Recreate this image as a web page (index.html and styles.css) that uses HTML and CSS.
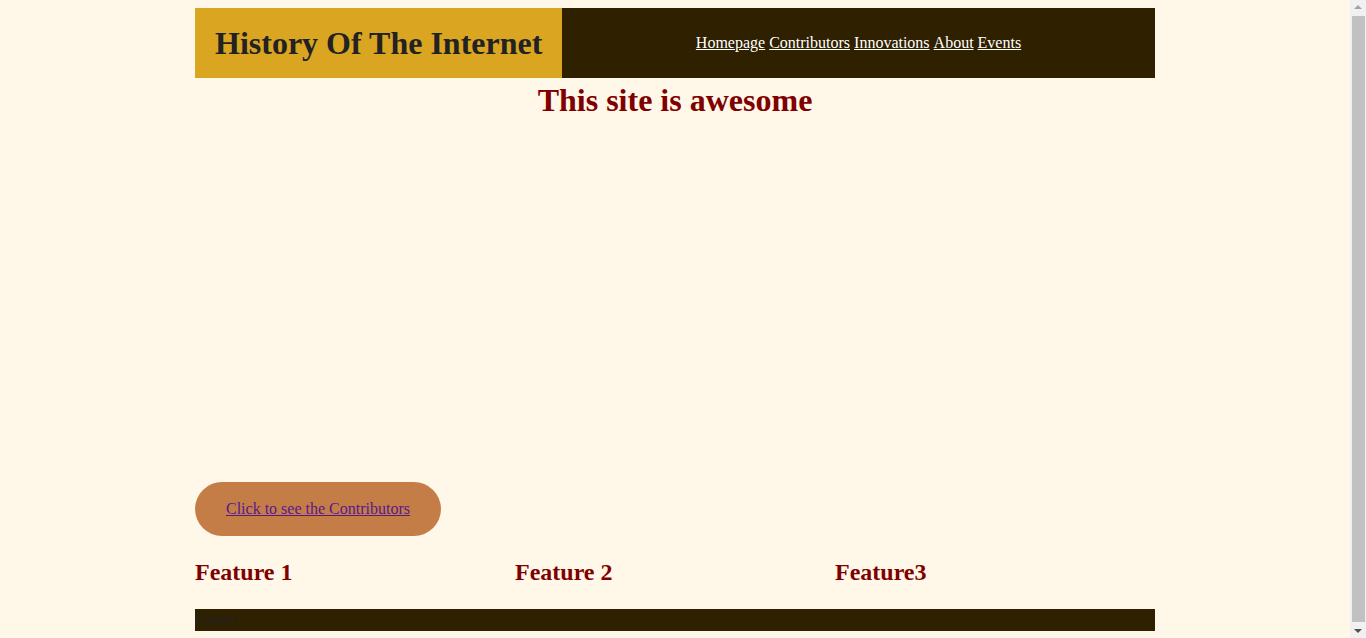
FILE: index.html
```html
<!DOCTYPE html>
<html lang="en">
<head>
<meta charset="utf-8">
<title>History Of The Internet</title>
<link rel="stylesheet" href="styles.css">
</head>
<body>
<div class="container">
  <header class="site-header">
    <div class="brand"><h1>History Of The Internet</h1></div>
    <nav class="nav">
      <a href="#">Homepage</a>
      <a href="#">Contributors</a>
      <a href="#">Innovations</a>
      <a href="#">About</a>
      <a href="#">Events</a>
    </nav>
  </header>
  <h2 class="hero-title">This site is awesome</h2>
  <div class="hero-space"></div>
  <div class="cta">
    <a class="cta-link" href="#">Click to see the Contributors</a>
  </div>
  <section class="features">
    <h2 class="feature">Feature 1</h2>
    <h2 class="feature">Feature 2</h2>
    <h2 class="feature">Feature3</h2>
  </section>
  <footer class="site-footer">Footer</footer>
</div>
<div class="scrollbar" aria-hidden="true">
  <span class="sb-arrow sb-up"></span>
  <span class="sb-thumb"></span>
  <span class="sb-arrow sb-down"></span>
</div>
</body>
</html>
```

FILE: styles.css
```css
html, body {
  background: #fff8e8;
}
body {
  margin: 8px 24px 8px 8px;
  font-family: "Liberation Serif", "Times New Roman", serif;
  font-size: 16px;
}
.container {
  width: 960px;
  margin: 0 auto;
}
.site-header {
  display: flex;
  height: 70px;
}
.brand {
  width: 367px;
  background: #daa520;
  display: flex;
  align-items: center;
  padding-left: 20px;
  box-sizing: border-box;
}
.brand h1 {
  margin: 0;
  font-size: 32px;
  color: #222222;
}
.nav {
  flex: 1;
  background: #2f2000;
  display: flex;
  align-items: center;
  justify-content: center;
  gap: 4px;
}
.nav a {
  color: #ffffff;
}
.hero-title {
  margin: 4px 0 0;
  text-align: center;
  font-size: 32px;
  color: #800000;
}
.hero-space {
  height: 363px;
}
.cta {
  display: flex;
}
.cta-link {
  display: inline-block;
  background: #c57d48;
  color: #551a8b;
  padding: 18px 31px;
  border-radius: 27px;
  line-height: 18px;
}
.features {
  display: grid;
  grid-template-columns: repeat(3, 1fr);
  margin-top: 23px;
}
.feature {
  margin: 0;
  font-size: 24px;
  color: #800000;
}
.site-footer {
  margin-top: 23px;
  background: #2f2000;
  color: #222222;
  height: 22px;
  line-height: 22px;
}

/* imitation of the window's vertical scrollbar */
.scrollbar {
  position: fixed;
  top: 0;
  right: 0;
  width: 16px;
  height: 100vh;
  background: #f1f1f1;
  display: flex;
  flex-direction: column;
  align-items: center;
}
.sb-arrow {
  flex: 0 0 17px;
  width: 0;
  height: 0;
  display: flex;
}
.sb-up {
  flex-basis: auto;
  margin: 5px 0 7px;
  border-left: 4px solid transparent;
  border-right: 4px solid transparent;
  border-bottom: 4px solid #a3a3a3;
}
.sb-thumb {
  flex: 1;
  width: 13px;
  margin-left: 1px;
  background: #c1c1c1;
}
.sb-down {
  flex-basis: auto;
  margin: 7px 0 5px;
  border-left: 4px solid transparent;
  border-right: 4px solid transparent;
  border-top: 4px solid #505050;
}
```
